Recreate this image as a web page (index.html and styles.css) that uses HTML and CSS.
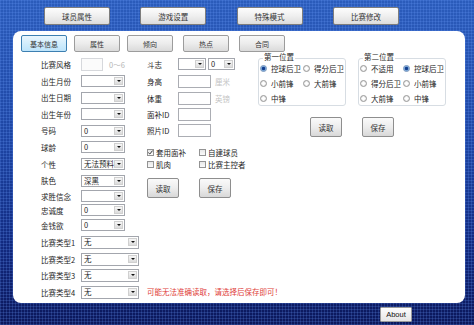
FILE: index.html
```html
<!DOCTYPE html>
<html lang="zh-CN">
<head>
  <meta charset="UTF-8">
  <meta name="viewport" content="width=device-width, initial-scale=1.0">
  <title>球员修改器</title>
  <link rel="stylesheet" href="styles.css">
</head>
<body>
  <div class="nav">
    <button class="nav-btn">球员属性</button>
    <button class="nav-btn">游戏设置</button>
    <button class="nav-btn">特殊模式</button>
    <button class="nav-btn">比赛修改</button>
  </div>

  <div class="panel">
    <div class="tabs">
      <button class="tab active">基本信息</button>
      <button class="tab">属性</button>
      <button class="tab">倾向</button>
      <button class="tab wide">热点</button>
      <button class="tab wide">合同</button>
    </div>

    <div class="content">
      <div class="col-left">
        <div class="row"><span class="lbl">比赛风格</span><span class="input off"></span><span class="hint">0～6</span></div>
        <div class="row"><span class="lbl">出生月份</span><span class="select"><span class="val"></span><span class="arrow"></span></span></div>
        <div class="row"><span class="lbl">出生日期</span><span class="select"><span class="val"></span><span class="arrow"></span></span></div>
        <div class="row"><span class="lbl">出生年份</span><span class="select"><span class="val"></span><span class="arrow"></span></span></div>
        <div class="row"><span class="lbl">号码</span><span class="select"><span class="val">0</span><span class="arrow"></span></span></div>
        <div class="row"><span class="lbl">球龄</span><span class="select"><span class="val">0</span><span class="arrow"></span></span></div>
        <div class="row"><span class="lbl">个性</span><span class="select"><span class="val">无法预料</span><span class="arrow"></span></span></div>
        <div class="row"><span class="lbl">肤色</span><span class="select"><span class="val">深黑</span><span class="arrow"></span></span></div>
        <div class="row"><span class="lbl">求胜信念</span><span class="select"><span class="val"></span><span class="arrow"></span></span></div>
        <div class="row"><span class="lbl">忠诚度</span><span class="select"><span class="val">0</span><span class="arrow"></span></span></div>
        <div class="row"><span class="lbl">金钱欲</span><span class="select"><span class="val">0</span><span class="arrow"></span></span></div>
        <div class="row"><span class="lbl">比赛类型1</span><span class="select long"><span class="val">无</span><span class="arrow"></span></span></div>
        <div class="row"><span class="lbl">比赛类型2</span><span class="select long"><span class="val">无</span><span class="arrow"></span></span></div>
        <div class="row"><span class="lbl">比赛类型3</span><span class="select long"><span class="val">无</span><span class="arrow"></span></span></div>
        <div class="row"><span class="lbl">比赛类型4</span><span class="select long"><span class="val">无</span><span class="arrow"></span></span></div>
      </div>

      <div class="col-mid">
        <div class="mid-rows">
          <div class="row"><span class="lbl">斗志</span><span class="select tiny"><span class="val"></span><span class="arrow"></span></span><span class="select tiny second"><span class="val">0</span><span class="arrow"></span></span></div>
          <div class="row"><span class="lbl">身高</span><span class="input"></span><span class="unit">厘米</span></div>
          <div class="row"><span class="lbl">体重</span><span class="input"></span><span class="unit">英镑</span></div>
          <div class="row"><span class="lbl">面补ID</span><span class="input"></span></div>
          <div class="row"><span class="lbl">照片ID</span><span class="input"></span></div>
        </div>
        <div class="checks">
          <label class="check"><span class="cb on"><svg viewBox="0 0 7 7" width="7" height="7"><path d="M1.3 3.6 L2.8 5 L5.6 1.6" stroke="#333" stroke-width="1" fill="none"/></svg></span>套用面补</label>
          <label class="check"><span class="cb"></span>自建球员</label>
          <label class="check"><span class="cb"></span>肌肉</label>
          <label class="check"><span class="cb"></span>比赛主控者</label>
        </div>
        <div class="btn-row">
          <button class="btn">读取</button>
          <button class="btn">保存</button>
        </div>
        <div class="warn">可能无法准确读取，请选择后保存即可！</div>
      </div>

      <div class="col-right">
        <div class="groups">
          <div class="group">
            <span class="legend">第一位置</span>
            <label class="radio"><span class="rd on"></span>控球后卫</label>
            <label class="radio"><span class="rd"></span>得分后卫</label>
            <label class="radio"><span class="rd"></span>小前锋</label>
            <label class="radio"><span class="rd"></span>大前锋</label>
            <label class="radio"><span class="rd"></span>中锋</label>
          </div>
          <div class="group">
            <span class="legend">第二位置</span>
            <label class="radio"><span class="rd"></span>不适用</label>
            <label class="radio"><span class="rd on"></span>控球后卫</label>
            <label class="radio"><span class="rd"></span>得分后卫</label>
            <label class="radio"><span class="rd"></span>小前锋</label>
            <label class="radio"><span class="rd"></span>大前锋</label>
            <label class="radio"><span class="rd"></span>中锋</label>
          </div>
        </div>
        <div class="btn-row right">
          <button class="btn">读取</button>
          <button class="btn">保存</button>
        </div>
      </div>
    </div>
  </div>

  <div class="footer">
    <button class="about">About</button>
  </div>
</body>
</html>
```

FILE: styles.css
```css
body {
  margin: 0;
  height: 325px;
  overflow: hidden;
  font-family: "Noto Sans CJK SC", "Liberation Sans", sans-serif;
  font-size: 7.5px;
  color: #262626;
  background:
    repeating-linear-gradient(90deg, rgba(110, 160, 255, 0.2) 0 1px, transparent 1px 3px),
    repeating-linear-gradient(0deg, rgba(110, 160, 255, 0.2) 0 1px, transparent 1px 3px),
    linear-gradient(#2b5cbb, #1d44a2 45%, #122a80 75%, #0b175a);
}
button {
  font-family: inherit;
  font-size: inherit;
  color: #333;
  padding: 0;
  cursor: pointer;
}
.nav {
  display: flex;
  gap: 30.3px;
  padding: 7px 0 0 44px;
}
.nav-btn {
  width: 66px;
  height: 18px;
  border: 1px solid #7d7d7d;
  border-radius: 2px;
  background: linear-gradient(#fdfdfd, #efefef 50%, #dcdcdc);
}
.panel {
  margin: 6px 0 0 13px;
  width: 452px;
  height: 272px;
  box-sizing: border-box;
  padding: 4px 0 0 8px;
  background: #fff;
  border-radius: 8px;
}
.tabs {
  display: flex;
  gap: 7px;
}
.tab {
  width: 46px;
  height: 17px;
  font-size: 7px;
  border: 1px solid #9c9c9c;
  border-radius: 2px;
  background: linear-gradient(#f8f8f8, #ececec 50%, #dadada);
}
.tab.wide {
  margin-left: 3px;
}
.tab.active {
  border-color: #3c7fb1;
  background: linear-gradient(#eaf6fd, #d2edfc 50%, #bde4fb);
}
.content {
  display: flex;
  margin-top: 4px;
  padding-left: 20px;
}
.col-left {
  width: 106px;
  display: grid;
  grid-template-rows: 16.5px 17px 16.5px 16.5px 16.5px 16.5px 17px 16px 15px 13.5px 16px 18px 16px 16.5px 17px;
}
.row {
  display: flex;
  align-items: center;
  white-space: nowrap;
}
.lbl {
  width: 40px;
  flex: none;
}
.col-mid .lbl {
  width: 31px;
}
.select {
  box-sizing: border-box;
  width: 44px;
  height: 12px;
  border: 1px solid #a3a6ad;
  background: #fff;
  display: flex;
  align-items: center;
}
.select.long {
  width: 58px;
  height: 13px;
}
.select.tiny {
  width: 28px;
}
.select.tiny.second {
  width: 27px;
  margin-left: 2px;
}
.select .val {
  flex: 1;
  padding-left: 2px;
  line-height: 10px;
  overflow: hidden;
}
.select .arrow {
  width: 9px;
  height: 8px;
  margin-right: 1px;
  box-sizing: border-box;
  border: 1px solid #d0d0d0;
  background: linear-gradient(#f6f6f6, #dcdcdc);
  display: flex;
  align-items: center;
  justify-content: center;
}
.select .arrow::after {
  content: "";
  border-left: 2px solid transparent;
  border-right: 2px solid transparent;
  border-top: 2px solid #111;
}
.input {
  box-sizing: border-box;
  width: 33px;
  height: 13px;
  border: 1px solid #abadb3;
  background: #fff;
}
.input.off {
  width: 22px;
  border-color: #d6d8dc;
  background: #fbfbfb;
}
.hint {
  margin-left: 6px;
  color: #b4b4b4;
}
.unit {
  margin-left: 4px;
  color: #c4c4c4;
}
.col-mid {
  width: 111px;
  display: flex;
  flex-direction: column;
}
.mid-rows {
  display: grid;
  grid-template-rows: 16.5px 17.5px 16px 16.5px 16.5px;
}
.checks {
  display: grid;
  grid-template-columns: 52px 52px;
  grid-auto-rows: 12px;
  margin-top: 7px;
}
.check {
  display: flex;
  align-items: center;
  white-space: nowrap;
}
.cb {
  box-sizing: border-box;
  width: 7px;
  height: 7px;
  margin-right: 2px;
  border: 1px solid #939393;
  background: linear-gradient(#e8e8e8, #fafafa);
  display: flex;
}
.cb svg {
  margin: -1px;
}
.btn-row {
  display: flex;
  gap: 20px;
  margin-top: 8px;
}
.btn {
  width: 32px;
  height: 20px;
  border: 1px solid #8e8e8e;
  border-radius: 2px;
  background: linear-gradient(#fafafa, #ededed 50%, #d8d8d8);
}
.warn {
  margin-top: auto;
  margin-bottom: 2.5px;
  line-height: 12px;
  color: #e0403a;
  white-space: nowrap;
}
.col-right {
  margin-top: 2px;
}
.groups {
  display: flex;
  gap: 12px;
}
.group {
  position: relative;
  box-sizing: border-box;
  width: 88px;
  height: 48px;
  padding: 2px 0 0 1px;
  border: 1px solid #d7dde3;
  border-radius: 3px;
  display: grid;
  grid-template-columns: 43px 43px;
  grid-auto-rows: 15px;
}
.legend {
  position: absolute;
  top: -6px;
  left: 4px;
  padding: 0 1px;
  height: 8px;
  line-height: 8px;
  background: #fff;
}
.radio {
  display: flex;
  align-items: center;
  white-space: nowrap;
  line-height: 9px;
}
.rd {
  box-sizing: border-box;
  width: 7px;
  height: 7px;
  margin-right: 4px;
  border-radius: 50%;
  border: 1px solid #989898;
  background: radial-gradient(circle, #fff 0 1px, #dedede 3px);
}
.rd.on {
  border-color: #6f8fb8;
  background: radial-gradient(circle, #123e8e 0 1.3px, #6ea0d8 2px, #d8e6f4 3px);
}
.btn-row.right {
  margin-top: 11px;
  padding-left: 52px;
}
.footer {
  display: flex;
  justify-content: flex-end;
  padding-right: 62px;
  margin-top: 4px;
}
.about {
  width: 32px;
  height: 15px;
  font-family: "Liberation Sans", sans-serif;
  font-size: 7.5px;
  color: #111;
  border: 1px solid #9a9a9a;
  border-radius: 1px;
  background: linear-gradient(#fdfdfd, #e6e6e6);
}
```
